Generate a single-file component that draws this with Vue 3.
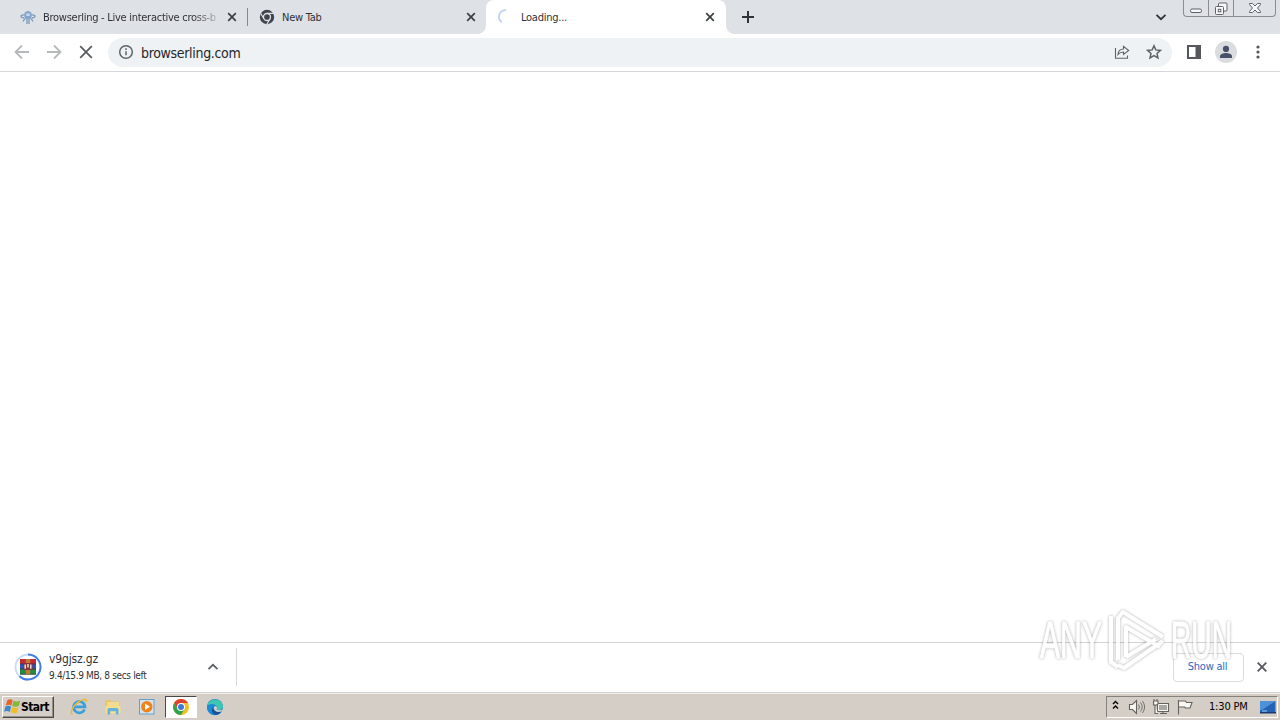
<template>
  <div class="desktop">
    <header class="tab-strip">
      <div v-for="tab in tabs" :key="tab.title" class="tab" :class="{ active: tab.active, divided: tab.divided }">
        <svg v-if="tab.icon === 'ling'" class="favicon" viewBox="0 0 16 16">
          <g fill="none" stroke="#7798bd" stroke-width="1.3">
            <path d="M4 9C0 8.500 0 6 4 5.800M12 9C16 8.500 16 6 12 5.800M5 9.500L3 12.500M7 10v5M9 10v5M11 9.500l2 3" />
          </g>
          <path d="M4 6C4.500 0.500 11.500 0.500 12 6l-1 4H5z" fill="#86a7ca" />
          <path d="M6.300 4.500h3.400v2.500H6.300z" fill="#c8d8ea" />
        </svg>
        <svg v-else-if="tab.icon === 'chrome'" class="favicon" viewBox="0 0 16 16">
          <circle cx="8" cy="8" r="7.200" fill="#3f444d" />
          <circle cx="8" cy="8" r="3.500" fill="#3f444d" stroke="#dee1e6" stroke-width="1.300" />
          <path d="M8 4.400h6.700M4.900 9.800L1.600 4.200M11.100 9.800L7.800 15.300" stroke="#dee1e6" stroke-width="1.200" />
        </svg>
        <svg v-else class="favicon" viewBox="0 0 16 16">
          <path d="M8 1.200A6.600 6.600 0 0 0 3.800 13.200" fill="none" stroke="#bfd3f2" stroke-width="1.700" />
        </svg>
        <span class="tab-title" :class="tab.icon">{{ tab.title }}</span>
        <svg class="tab-close" viewBox="0 0 10 10"><path d="M1.200 1.200l7.600 7.600M8.800 1.200L1.200 8.800" /></svg>
      </div>
      <svg class="new-tab" viewBox="0 0 14 14"><path d="M7 1v12M1 7h12" /></svg>
      <svg class="tab-search" viewBox="0 0 12 8"><path d="M1.500 1.800L6 6.200l4.500-4.400" /></svg>
      <div class="window-buttons">
        <span class="win minimize"><svg viewBox="0 0 14 6"><rect x="1.500" y="1" width="11" height="3.500" rx="1.500" /></svg></span>
        <span class="win restore">
          <svg viewBox="0 0 14 14"><path d="M4.500 4V2q0-1 1-1h6.500q1 0 1 1v6q0 1-1 1h-2" /><rect x="1.500" y="4.500" width="8" height="8" rx="1" /><rect x="4.300" y="7.300" width="2.500" height="2.500" /></svg>
        </span>
        <span class="win shut"><svg viewBox="0 0 14 12"><path d="M1.500 1.500h3L7 4l2.500-2.500h3v1L9.500 6l3 3.500v1h-3L7 8l-2.500 2.500h-3v-1l3-3.500-3-3.500z" /></svg></span>
      </div>
    </header>

    <nav class="toolbar">
      <svg class="nav-icon muted" viewBox="0 0 16 16"><path d="M15 8H1.800M8 1.500L1.500 8 8 14.500" /></svg>
      <svg class="nav-icon muted" viewBox="0 0 16 16"><path d="M1 8h13.200M8 1.500L14.500 8 8 14.500" /></svg>
      <svg class="nav-icon" viewBox="0 0 16 16"><path d="M2.200 2.200l11.600 11.600M13.800 2.200L2.200 13.800" /></svg>
      <div class="omnibox">
        <svg class="info" viewBox="0 0 16 16"><circle cx="8" cy="8" r="6.300" /><path d="M8 7.200v4M8 4.300v1.600" /></svg>
        <span class="url">browserling.com</span>
        <svg class="share" viewBox="0 0 16 16"><path d="M1.500 4v10.300h12V11.500M4 10.500c.3-4 2.500-5.500 5.500-5.500V2.300L14.700 6.500 9.500 10.500V8C7 8 5.300 8.800 4 10.500z" /></svg>
        <svg class="star" viewBox="0 0 16 16"><path d="M8 1.800l1.800 4.100 4.600.5-3.400 3 1 4.500L8 11.600l-4 2.300 1-4.500-3.400-3 4.600-.5z" /></svg>
      </div>
      <svg class="panel" viewBox="0 0 14 14"><path d="M0 0h14v14H0zM2 2v10h6.500V2z" fill-rule="evenodd" /></svg>
      <svg class="avatar" viewBox="0 0 22 22"><circle cx="11" cy="11" r="11" fill="#dadce0" /><circle cx="11" cy="7.900" r="3.100" fill="#485168" /><path d="M5 17v-1.800c0-2.300 3.500-3.200 6-3.200s6 .9 6 3.200V17z" fill="#485168" /></svg>
      <svg class="dots" viewBox="0 0 4 14"><circle cx="2" cy="2" r="1.600" /><circle cx="2" cy="7" r="1.600" /><circle cx="2" cy="12" r="1.600" /></svg>
    </nav>

    <main class="page"></main>

    <section class="shelf">
      <div class="download">
        <svg class="progress" viewBox="0 0 28 28">
          <circle cx="14" cy="14" r="12.500" fill="none" stroke="#c9d8f4" stroke-width="1.800" />
          <path d="M14 1.500A12.500 12.500 0 1 1 5.500 23.200" fill="none" stroke="#3f7be4" stroke-width="1.900" />
          <path d="M6 6h16v5H6z" fill="#c02c34" />
          <path d="M6 11h16v5H6z" fill="#3153b5" />
          <path d="M6 16h16v5.500H6z" fill="#268b41" />
          <path d="M6 11h16M6 16h16M6 21.200h16" stroke="#2b2f45" stroke-width=".7" />
          <path d="M11.800 6h4.400v15.500h-4.400z" fill="#c07a35" />
          <path d="M9.500 10h9v7h-9z" fill="#84343c" />
          <path d="M11.200 15.800v-4.300M16.800 15.800v-4.300M14 11v3.500" fill="none" stroke="#f6ecd8" stroke-width="1.400" />
        </svg>
        <div class="file">
          <span class="file-name">v9gjsz.gz</span>
          <span class="file-status">9.4/15.9 MB, 8 secs left</span>
        </div>
        <svg class="chevron" viewBox="0 0 12 8"><path d="M1.500 6.200L6 1.800l4.500 4.400" /></svg>
      </div>
      <button class="show-all">Show all</button>
      <svg class="shelf-close" viewBox="0 0 12 12"><path d="M1.700 1.700l8.600 8.600M10.300 1.700l-8.600 8.600" /></svg>
    </section>

    <footer class="taskbar">
      <button class="start">
        <svg viewBox="0 0 18 18">
          <path d="M3.500 2.500q3-2 5.700-.2L7.900 8Q5 6.500 1.900 8z" fill="#e9642c" />
          <path d="M10 3q3.500 1.500 7.300-.3L15.600 8.600Q12 10 8.700 8.500z" fill="#83b83b" />
          <path d="M1.500 9q3-1.500 6 .1L6.100 14.800q-3-1.700-6-.2z" fill="#3c89cf" />
          <path d="M8.400 9.600q3 1.500 6.900.1l-1.600 5.800q-3.400 1.300-6.600-.3z" fill="#f3bd28" />
        </svg>
        <span>Start</span>
      </button>
      <div class="launchers">
        <span class="launcher">
          <svg viewBox="0 0 18 18">
            <path d="M14.500 11.500A5.700 5.700 0 1 1 15 8.900H5" fill="none" stroke="#3c9fdc" stroke-width="2.700" />
            <path d="M2.500 16C-1.500 16 4 6 10 3c4-2.300 7-2 6.500 1.200" fill="none" stroke="#e5b83b" stroke-width="1.400" />
          </svg>
        </span>
        <span class="launcher">
          <svg viewBox="0 0 18 18">
            <path d="M1.500 3.500V2.300h5l1 1.200h8V15h-14z" fill="#e6c462" />
            <path d="M3 5h12M3 7h12" stroke="#fff4bf" stroke-width="1.200" />
            <path d="M1.500 8h15v7.500h-15z" fill="#f5df8e" />
            <path d="M3.500 16.500v-5q0-1.500 1.500-1.500h8q1.500 0 1.500 1.500v5h-2.700v-3.300H6.200v3.300z" fill="#65b3d8" />
          </svg>
        </span>
        <span class="launcher">
          <svg viewBox="0 0 18 18">
            <rect x="1.500" y="1.500" width="14.500" height="14.500" fill="#d3e4ef" stroke="#65a0cc" />
            <circle cx="8.800" cy="8.800" r="5.700" fill="#ef8218" />
            <path d="M7 5.500l5 3.300-5 3.300z" fill="#fff" />
          </svg>
        </span>
        <span class="launcher current">
          <svg viewBox="0 0 18 18">
            <circle cx="9" cy="9" r="8" fill="#f4bf20" />
            <path d="M9 9L5.500 11 2.100 5A8 8 0 0 1 15.900 5H9z" fill="#df4033" />
            <path d="M2.100 5A8 8 0 0 0 9 17l3.500-6H5.500z" fill="#31a34d" />
            <circle cx="9" cy="9" r="4" fill="#fff" /><circle cx="9" cy="9" r="3" fill="#3d79d8" />
          </svg>
        </span>
        <span class="launcher">
          <svg viewBox="0 0 18 18">
            <circle cx="9" cy="9" r="8" fill="#1878c8" />
            <path d="M1.200 8C2 .5 15-2 17 8c.3 4-4.500 5-6.500 3.500 1.500-2 0-5-3.500-5-2.500 0-4.500.5-5.800 1.500z" fill="#3ec6b3" />
            <path d="M1 9c1-3.500 7-4 8-1-5 1-3 7 1.500 9C5 18 1 14 1 9z" fill="#1b8bd5" />
            <path d="M7.500 9.500c0 4.500 4 5.500 8 3.800-2 3.700-5.500 4-7 3.200-3-2-3.500-5-1-7z" fill="#175396" />
            <path d="M10.500 11.500c1.500-1.500 0-2.500-.5-3.500-1.500 0-2.500 1.300-2.300 2.800C8.700 14 13 14.800 16 13l1.500-1.700c-2.500 1.300-5.500 1.200-7 .2z" fill="#d4cec6" />
          </svg>
        </span>
      </div>
      <div class="tray">
        <svg class="expand" viewBox="0 0 7 10"><path d="M1 4L3.500 1.500 6 4M1 8.500L3.500 6 6 8.500" /></svg>
        <svg class="tray-icon volume" viewBox="0 0 18 16"><path class="glyph" d="M1.500 5.500h3l4-4v13l-4-4h-3z" /><path class="wave" d="M10.500 5.500q1.800 2.500 0 5M12.500 3.500q3.400 4.500 0 9M14.500 2q4.200 6 0 12" /></svg>
        <svg class="tray-icon net" viewBox="0 0 18 16"><path class="glyph" d="M5.500 4.500h11v8h-11zM8 14.500h7M11 12.500v2" /><path d="M7 6h8v5H7z" fill="#aaa8a5" /><path class="glyph" d="M1.500 2v4h1.500v8.500h3M2 0v2M5 0v2M1.500 2h4.500v3l-1.500 1h-2" /></svg>
        <svg class="tray-icon flag" viewBox="0 0 18 16"><path class="glyph" d="M2.500 1v14.500M3 2h6.500l1 1.500h5.500l-2 5.500H9.500L8.500 8H3" /></svg>
        <span class="clock">1:30 PM</span>
        <svg class="desktop-icon" viewBox="0 0 16 14"><path d="M0 1h15.500v11H0z" fill="#2263b5" /><path d="M0 1h15.500L2 10H0z" fill="#4d91d9" /><path d="M0 12h16v1.500H0z" fill="#173b70" /><path d="M2 11h5" stroke="#9dd0f1" /></svg>
      </div>
    </footer>

    <!-- 水印覆盖在页面与下载栏之上 -->
    <svg class="watermark" viewBox="0 0 210 76">
      <g class="mark">
        <text x="8" y="56" textLength="62" lengthAdjust="spacingAndGlyphs">ANY</text>
        <text x="139" y="56" textLength="61" lengthAdjust="spacingAndGlyphs">RUN</text>
        <path d="M79 14v46l7 5" />
        <path d="M86 15v43M86 16l5-6 40 25M94 55V25l34 20M131 39L92 66l-6-3M94 55l30-18" />
      </g>
    </svg>
  </div>
</template>

<script setup>
const tabs = [
  { title: 'Browserling - Live interactive cross-b', icon: 'ling', divided: true },
  { title: 'New Tab', icon: 'chrome' },
  { title: 'Loading...', icon: 'spinner', active: true },
]
</script>

<style>
body {
  overflow: hidden;
}
</style>

<style scoped>
.desktop {
  position: relative;
  display: flex;
  flex-direction: column;
  width: 1280px;
  height: 720px;
  background: #fff;
  color: #303238;
  font-family: 'DejaVu Sans Condensed', 'DejaVu Sans', sans-serif;
  font-stretch: condensed;
  font-size: 11px;
}

svg {
  display: block;
  flex: none;
}

button {
  font: inherit;
}

.tab-strip {
  display: flex;
  align-items: center;
  height: 34px;
  padding-left: 8px;
  box-sizing: border-box;
  background: #dee1e6;
}

.tab {
  position: relative;
  display: flex;
  align-items: center;
  width: 239px;
  height: 34px;
  padding: 0 10px 0 12px;
  box-sizing: border-box;
}

.tab.divided::after {
  content: '';
  position: absolute;
  top: 8px;
  right: -1px;
  width: 1px;
  height: 18px;
  background: #85888d;
}

.tab.active {
  width: 240px;
  padding-right: 11px;
  background: #fff;
  border-radius: 8px 8px 0 0;
}

.tab.active::before,
.tab.active::after {
  content: '';
  position: absolute;
  bottom: 0;
  width: 8px;
  height: 8px;
}

.tab.active::before {
  left: -8px;
  background: radial-gradient(circle at 0 0, transparent 7.5px, #fff 8px);
}

.tab.active::after {
  right: -8px;
  background: radial-gradient(circle at 100% 0, transparent 7.5px, #fff 8px);
}

.favicon {
  width: 16px;
  height: 16px;
}

.tab-title {
  flex: 1;
  margin: 0 8px 0 7px;
  white-space: nowrap;
  letter-spacing: -0.25px;
}

.tab-title.ling {
  letter-spacing: -0.27px;
  mask-image: linear-gradient(to right, #000 150px, rgba(0, 0, 0, 0.15) 176px);
}

.tab-close {
  width: 10px;
  height: 10px;
  fill: none;
  stroke: #3c4043;
  stroke-width: 1.7;
}

.new-tab {
  width: 14px;
  height: 14px;
  margin-left: 15px;
  fill: none;
  stroke: #303338;
  stroke-width: 2;
}

.tab-search {
  width: 12px;
  height: 8px;
  margin-left: auto;
  fill: none;
  stroke: #303338;
  stroke-width: 1.8;
}

.window-buttons {
  display: flex;
  align-self: flex-start;
  width: 93px;
  height: 17px;
  margin: 0 4px 0 16px;
  box-sizing: border-box;
  border: 1px solid #8b8d91;
  border-top: 0;
  border-radius: 0 0 4px 4px;
}

.win {
  display: flex;
  align-items: center;
  justify-content: center;
  width: 25px;
  box-sizing: border-box;
  border-right: 1px solid #8b8d91;
}

.win svg {
  width: 14px;
  fill: #f7f8f9;
  stroke: #5e6269;
  stroke-width: 1;
}

.minimize svg {
  margin-top: 5px;
}

.restore svg {
  margin-top: 1px;
}

.shut {
  flex: 1;
  border: 0;
}

.toolbar {
  display: flex;
  align-items: center;
  height: 38px;
  padding: 0 20px 1px 14px;
  box-sizing: border-box;
  border-bottom: 1px solid #d5d7da;
}

.nav-icon {
  width: 16px;
  height: 16px;
  margin-right: 16px;
  fill: none;
  stroke: #5a5d61;
  stroke-width: 1.8;
}

.nav-icon.muted {
  stroke: #b6b8ba;
}

.omnibox {
  display: flex;
  align-items: center;
  width: 1064px;
  height: 29px;
  margin-left: -2px;
  padding: 0 10px;
  box-sizing: border-box;
  border-radius: 15px;
  background: #eff2f4;
}

.omnibox svg {
  width: 16px;
  height: 16px;
  fill: none;
  stroke: #5f6368;
  stroke-width: 1.5;
}

.url {
  flex: 1;
  margin-left: 7px;
  padding-top: 1px;
  font-size: 14px;
  letter-spacing: -0.32px;
  color: #25272b;
}

.omnibox .share {
  stroke-width: 1.1;
}

.star {
  margin-left: 16px;
}

.panel {
  width: 14px;
  height: 14px;
  margin-left: 15px;
  fill: #55575b;
}

.avatar {
  width: 22px;
  height: 22px;
  margin-left: 14px;
}

.dots {
  width: 4px;
  height: 14px;
  margin-left: 19px;
  fill: #55585c;
}

.page {
  flex: 1;
}

.shelf {
  display: flex;
  align-items: center;
  height: 50px;
  padding: 0 12px 1px 0;
  box-sizing: border-box;
  border-top: 1px solid #d3d4d6;
}

.download {
  display: flex;
  align-items: center;
  width: 237px;
  height: 38px;
  padding: 0 17px 0 14px;
  box-sizing: border-box;
  border-right: 1px solid #d5d6d8;
}

.progress {
  width: 28px;
  height: 28px;
}

.file {
  display: flex;
  flex: 1;
  flex-direction: column;
  gap: 3px;
  margin: 1px 0 0 7px;
  white-space: nowrap;
}

.file-name {
  font-size: 12px;
  line-height: 14px;
  letter-spacing: -0.15px;
}

.file-status {
  font-size: 10px;
  line-height: 14px;
  letter-spacing: -0.35px;
}

.chevron {
  width: 12px;
  height: 8px;
  fill: none;
  stroke: #5c5f63;
  stroke-width: 1.7;
}

.show-all {
  width: 71px;
  height: 29px;
  margin-left: auto;
  padding: 0 2px 1px 0;
  border: 1px solid #dadce0;
  border-radius: 4px;
  background: #fff;
  color: #2d6bbd;
  letter-spacing: -0.25px;
}

.shelf-close {
  width: 12px;
  height: 12px;
  margin-left: 12px;
  fill: none;
  stroke: #56585c;
  stroke-width: 1.8;
}

.taskbar {
  display: flex;
  align-items: center;
  height: 28px;
  padding: 0 2px;
  box-sizing: border-box;
  border-top: 1px solid #d3d1cd;
  background: #d4cec6;
  box-shadow: inset 0 1px #f1eeea;
}

.start {
  display: flex;
  align-items: center;
  width: 52px;
  height: 22px;
  padding: 0 0 0 1px;
  border: 1px solid;
  border-color: #fff #4b4946 #4b4946 #fff;
  background: #d4cec6;
  box-shadow: inset -1px -1px #938f89;
  color: #000;
  font-size: 12px;
  font-weight: bold;
  letter-spacing: -0.6px;
}

.start svg {
  width: 17px;
  height: 17px;
}

.launchers {
  display: flex;
  gap: 2px;
  margin-left: 9px;
}

.launcher {
  display: flex;
  align-items: center;
  justify-content: center;
  width: 32px;
  height: 22px;
}

.launcher svg {
  width: 18px;
  height: 18px;
}

.launcher.current {
  box-sizing: border-box;
  border: 1px solid;
  border-color: #4b4946 #fff #fff #4b4946;
  background: #fff;
}

.tray {
  display: flex;
  align-items: center;
  width: 172px;
  height: 22px;
  margin-left: auto;
  padding: 0 1px 0 5px;
  box-sizing: border-box;
  border: 1px solid;
  border-color: #85817b #fff #fff #85817b;
}

.expand {
  width: 7px;
  height: 10px;
  margin-top: -3px;
  fill: none;
  stroke: #000;
  stroke-width: 1.4;
}

.tray-icon {
  width: 18px;
  height: 16px;
  margin-left: 6px;
}

.volume {
  margin-left: 9px;
}

.glyph {
  fill: #f8f7f4;
  stroke: #66635f;
  stroke-width: 1.1;
}

.wave {
  fill: none;
  stroke: #77746f;
}

.clock {
  margin-left: 15px;
  color: #000;
  letter-spacing: -0.18px;
  white-space: nowrap;
}

.desktop-icon {
  width: 16px;
  height: 14px;
  margin-left: auto;
}

.watermark {
  position: absolute;
  left: 1032px;
  top: 602px;
  width: 210px;
  height: 76px;
  pointer-events: none;
}

.mark {
  fill: #fff;
  stroke: #fff;
  stroke-width: 1;
  opacity: 0.8;
  filter: drop-shadow(0 0 1.5px rgba(0, 0, 0, 0.4));
}

.mark path {
  fill: none;
  stroke-width: 4;
  stroke-linejoin: round;
}

.mark text {
  font-family: 'Liberation Sans', sans-serif;
  font-size: 51px;
}
</style>
